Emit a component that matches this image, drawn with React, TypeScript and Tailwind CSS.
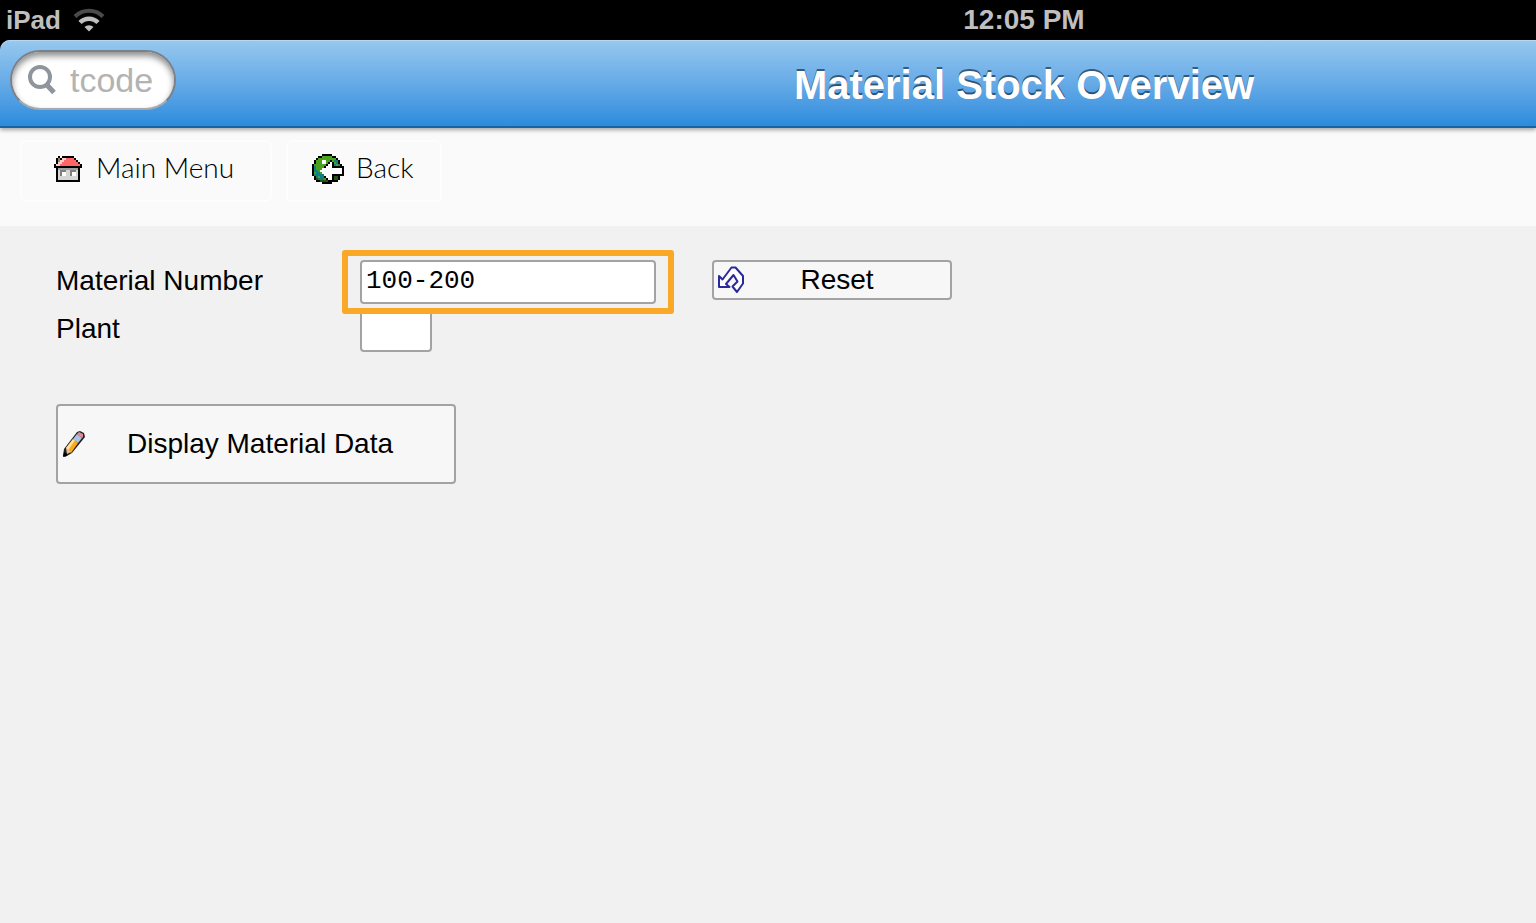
import { useState } from "react";
import type { FormEvent } from "react";

// one letter per square, "." is see-through
const COLORS: Record<string, string> = {
  k: "#000000",
  w: "#ffffff",
  r: "#ff6666",
  p: "#ffcccc",
  o: "#8c8c6a",
  l: "#d6d6d6",
  a: "#7f7f7f",
  g: "#a0a0a0",
  G: "#4aa31c",
  T: "#0f8080",
  D: "#26530d",
};

const HOUSE = [
  "..k.kkkkkk....",
  ".kokpprrrrk...",
  ".kopprrrrrrk..",
  ".kpprrrrrrrrk.",
  "kpprrrrrrrrrrk",
  "kkkkkkkkkkkkkk",
  ".kggggggggggk.",
  ".klaaallaaalk.",
  ".klawwllawwlk.",
  ".klawwllawwlk.",
  ".kllllllllllk.",
  ".kllllllllllk.",
  ".kkkkkkkkkkkk.",
];

const GLOBE = [
  ".....kkkkk......",
  "...kkGGGGGkk....",
  "..kGGGGGGGGGk...",
  ".kGGGwwGGkGTTk..",
  ".kGGGwwGkwkGTk..",
  "kGGGGGGkwwkTGTk.",
  "kTGGGGkwwwkkkkkk",
  "kTGGGwwwwwwwwwwk",
  "kTTGwwwwwwwwwwwk",
  "kGTTGwwwwwwwwwwk",
  "kTTTTTwwwwkkkkkk",
  ".kTGTTkwwwkDDk..",
  ".kDTTTGkwwkDDk..",
  "..kkDDDDkkkkk...",
  ".....kkkkk......",
];

function PixelIcon({ rows, className }: { rows: string[]; className: string }) {
  return (
    <svg viewBox={`0 0 ${rows[0].length} ${rows.length}`} className={className} shapeRendering="crispEdges" aria-hidden="true">
      {rows.map((row, y) =>
        row.split("").map((c, x) =>
          c === "." ? null : <rect key={`${x}-${y}`} x={x} y={y} width="1" height="1" fill={COLORS[c]} />
        )
      )}
    </svg>
  );
}

function WifiIcon() {
  return (
    <svg viewBox="0 0 32 24" className="w-8 h-6" fill="none" aria-hidden="true">
      <path d="M2 8.5a20 20 0 0 1 28 0" stroke="#4a4a4a" strokeWidth="4" />
      <path d="M7 14.500a12.500 12.500 0 0 1 18 0" stroke="#bfbfbf" strokeWidth="4.500" />
      <path d="M16 23.500l-4.500-4.500a6.400 6.400 0 0 1 9 0z" fill="#bfbfbf" />
    </svg>
  );
}

function SearchIcon() {
  return (
    <svg viewBox="0 0 28 30" className="w-7 h-[30px] shrink-0" fill="none" stroke="#8e959c" aria-hidden="true">
      <circle cx="12" cy="12" r="10" strokeWidth="4" />
      <path d="M18.500 19.500l7.500 8" strokeWidth="5" />
    </svg>
  );
}

function UndoIcon() {
  return (
    <svg viewBox="0 0 26 28" className="w-[26px] h-7 shrink-0" fill="#fff" stroke="#29299c" strokeWidth="2" aria-hidden="true">
      <path d="M1 10v11h10.500l-3.500-3 7.500-9 4 6.500-5 5 4.500 5.500 6-8.500v-7.500L17.500 1.500h-4L4.500 13.500z" strokeLinejoin="round" />
    </svg>
  );
}

function PencilIcon() {
  return (
    <svg viewBox="0 0 24 28" className="w-6 h-7 shrink-0" aria-hidden="true">
      <path d="M1 26l1-7L15 2l3-1 4 2 1 4-13 16-7 4z" fill="#222" />
      <path d="M4 18l7-9 5 4-7 10z" fill="#f8a91d" />
      <path d="M4 18l7-9 2 1.500-7 10z" fill="#ffe0a0" />
      <path d="M11 9l4-5 5 4-4 5z" fill="#a9c4e6" />
      <path d="M15 4l2-2 4 2v3l-1 1z" fill="#e08a9a" />
      <path d="M4 18l5 4-4 2z" fill="#e8c08a" />
      <path d="M1 27l1-5 4 3z" fill="#000" />
    </svg>
  );
}

export default function App() {
  const [tcode, setTcode] = useState("");
  const [material, setMaterial] = useState("100-200");
  const [plant, setPlant] = useState("");

  const handleReset = () => {
    setMaterial("");
    setPlant("");
  };

  const handleSubmit = (e: FormEvent) => {
    e.preventDefault();
  };

  return (
    <div className="min-h-screen bg-[#f1f1f1] font-['Liberation_Sans',Arial,sans-serif] text-[28px] leading-[42px] text-black">
      <div className="h-10 bg-black text-[#bfbfbf] font-bold grid grid-cols-[512px_1fr] items-center">
        <div className="flex items-center gap-3 pl-1.5 leading-9">
          <span className="text-[26px]">iPad</span>
          <WifiIcon />
        </div>
        <div className="text-center leading-10">12:05 PM</div>
      </div>

      <div className="bg-black">
        <header className="relative h-[88px] rounded-tl-[10px] border-b-2 border-[#1c639f] bg-linear-to-b from-[#97c8ef] to-[#2a8cdd] shadow-[inset_0_1px_0_#b5d8f3,0_2px_4px_rgba(0,0,0,0.35)] grid grid-cols-[512px_1fr] items-center">
          <label className="ml-2.5 mb-1.5 w-[166px] h-[60px] rounded-full border-2 border-[#7c8187] border-b-[#a3aab0] bg-white shadow-[inset_0_4px_6px_rgba(0,0,0,0.45)] flex items-center gap-3.5 px-4">
            <SearchIcon />
            <input
              type="text"
              aria-label="Transaction code"
              placeholder="tcode"
              value={tcode}
              onChange={(e) => setTcode(e.target.value)}
              className="w-full min-w-0 bg-transparent outline-none text-[34px] placeholder:text-[#b3b3b3]"
            />
          </label>
          <h1 className="pt-1 text-center text-[40px] leading-[48px] font-bold text-white [text-shadow:0_-2px_0_rgba(0,0,0,0.5)]">
            Material Stock Overview
          </h1>
        </header>
      </div>

      <nav className="bg-[#fafafa] px-5 pt-3 pb-6 flex gap-3.5 font-[Lato,sans-serif] font-light">
        <button type="button" className="w-[252px] h-[62px] rounded-md border-2 border-[#fdfdfd] flex items-center gap-3.5 pb-1 pl-8">
          <PixelIcon rows={HOUSE} className="w-7 h-[26px]" />
          <span className="pb-1">Main Menu</span>
        </button>
        <button type="button" className="w-[156px] h-[62px] rounded-md border-2 border-[#fdfdfd] flex items-center gap-3 pb-1 pl-6">
          <PixelIcon rows={GLOBE} className="w-8 h-[30px]" />
          <span className="pb-1">Back</span>
        </button>
      </nav>

      <form onSubmit={handleSubmit} className="px-14 py-[34px]">
        <div className="grid grid-cols-[304px_1fr] gap-y-1 items-start">
          <label htmlFor="material">Material Number</label>
          <div className="flex items-start gap-14">
            <div className="relative w-[296px]">
              <input
                id="material"
                type="text"
                value={material}
                onChange={(e) => setMaterial(e.target.value)}
                className="block w-full h-11 rounded-[4px] border-2 border-[#a3a3a3] bg-white px-1 pb-0.5 outline-none font-['Liberation_Mono',monospace] text-[26px]"
              />
              <div className="absolute z-10 -inset-x-[18px] -top-2.5 -bottom-2.5 border-6 border-[#f9a828] rounded-[3px] pointer-events-none" />
            </div>
            <button
              type="button"
              onClick={handleReset}
              className="w-60 h-10 rounded-[4px] border-2 border-[#a3a3a3] bg-[#f7f7f7] flex items-center pl-1 pr-5"
            >
              <UndoIcon />
              <span className="flex-1 text-center">Reset</span>
            </button>
          </div>
          <label htmlFor="plant">Plant</label>
          <input
            id="plant"
            type="text"
            value={plant}
            onChange={(e) => setPlant(e.target.value)}
            className="block w-[72px] h-11 rounded-[4px] border-2 border-[#a3a3a3] bg-white px-1 pb-0.5 outline-none font-['Liberation_Mono',monospace] text-[26px]"
          />
        </div>
        <button
          type="submit"
          className="mt-[52px] w-[400px] h-20 rounded-[4px] border-2 border-[#a3a3a3] bg-[#f7f7f7] flex items-center pl-1 pr-5"
        >
          <PencilIcon />
          <span className="flex-1 text-center">Display Material Data</span>
        </button>
      </form>
    </div>
  );
}
